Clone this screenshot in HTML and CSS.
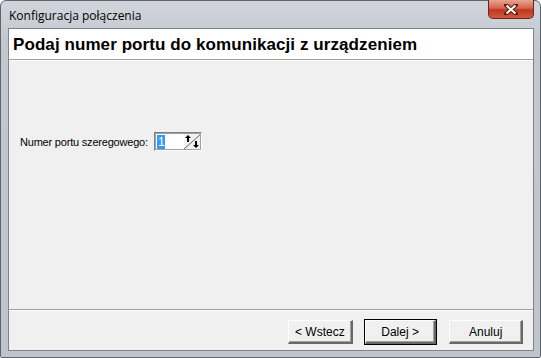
FILE: index.html
```html
<!DOCTYPE html>
<html lang="pl">
<head>
    <meta charset="UTF-8">
    <title>Konfiguracja połączenia</title>
    <link rel="stylesheet" href="styles.css">
</head>
<body>
    <div class="window">
        <div class="titlebar">
            <span class="title">Konfiguracja połączenia</span>
            <div class="close">
                <svg width="14" height="11" viewBox="0 0 14 11">
                    <path d="M2 1 L12 10 M12 1 L2 10" stroke="#5a1a10" stroke-width="4" stroke-linecap="square"/>
                    <path d="M2.5 1.5 L11.5 9.5 M11.5 1.5 L2.5 9.5" stroke="#ffffff" stroke-width="2"/>
                </svg>
            </div>
        </div>
        <div class="client">
            <div class="header">Podaj numer portu do komunikacji z urządzeniem</div>
            <div class="content">
                <div class="field">
                    <span class="label">Numer portu szeregowego:</span>
                    <div class="spin">
                        <span class="spin-value"><span class="sel">1</span></span>
                        <div class="spin-btn">
                            <svg width="17" height="15" viewBox="0 0 17 15">
                                <line x1="0" y1="15" x2="17" y2="0" stroke="#606060" stroke-width="1"/>
                                <path d="M4 1 L1 4 H3 V8 H5 V4 H7 Z" fill="#000"/>
                                <path d="M12 14 L9 11 H11 V7 H13 V11 H15 Z" fill="#000"/>
                            </svg>
                        </div>
                    </div>
                </div>
            </div>
            <div class="footer">
                <button class="btn">&lt; Wstecz</button>
                <button class="btn btn-default">Dalej &gt;</button>
                <button class="btn btn-cancel">Anuluj</button>
            </div>
        </div>
    </div>
</body>
</html>
```

FILE: styles.css
```css
body {
    margin: 0;
    padding: 0;
    background: #ffffff;
    font-family: "Liberation Sans", Arial, sans-serif;
}
.window {
    width: 541px;
    height: 358px;
    box-sizing: border-box;
    background: linear-gradient(#d2d6dc, #c3c8cf 40px, #c0c5cc);
    border: 1px solid #5c6470;
    border-radius: 6px 6px 2px 2px;
    display: flex;
    flex-direction: column;
}
.titlebar {
    height: 27px;
    display: flex;
    justify-content: space-between;
    align-items: flex-start;
    padding: 0 6px 0 8px;
}
.title {
    font-family: "Open Sans", "Noto Sans", sans-serif;
    font-size: 12px;
    color: #000;
    margin-top: 6px;
}
.close {
    width: 46px;
    height: 19px;
    margin-top: -1px;
    box-sizing: border-box;
    border: 1px solid #5e2a22;
    border-top: none;
    border-radius: 0 0 5px 5px;
    background: linear-gradient(#e8a493, #d4654e 45%, #c2361f 55%, #d25a3c);
    display: flex;
    align-items: center;
    justify-content: center;
}
.client {
    flex: 1;
    margin: 0 6px 6px 7px;
    background: #f0f0f0;
    border: 1px solid #7d8490;
    display: flex;
    flex-direction: column;
}
.header {
    height: 30px;
    background: #ffffff;
    border-bottom: 1px solid #a0a0a0;
    box-shadow: 0 1px 0 #ffffff;
    font-size: 17px;
    font-weight: bold;
    letter-spacing: 0.08px;
    line-height: 31px;
    padding-left: 4px;
    color: #000;
}
.content {
    flex: 1;
    padding: 72px 0 0 11px;
}
.field {
    display: flex;
    align-items: center;
    gap: 6px;
    font-size: 11px;
    letter-spacing: -0.2px;
}
.spin {
    width: 48px;
    height: 19px;
    box-sizing: border-box;
    border-top: 1px solid #808080;
    border-left: 1px solid #808080;
    border-right: 1px solid #ffffff;
    border-bottom: 1px solid #ffffff;
    background: #fff;
    display: flex;
    outline: 1px solid #a0a0a0;
    outline-offset: -2px;
}
.spin-value {
    flex: 1;
    padding: 2px 0 0 2px;
    font-size: 12px;
}
.sel {
    background: #3399ff;
    color: #ffffff;
    padding: 0 1px;
}
.spin-btn {
    width: 17px;
    background: #f0f0f0;
    display: flex;
    align-items: center;
}
.spin-btn svg {
    display: block;
}
.footer {
    height: 41px;
    border-top: 1px solid #a0a0a0;
    box-shadow: inset 0 1px 0 #ffffff;
    display: flex;
    align-items: flex-start;
    padding: 10px 0 0 279px;
    box-sizing: border-box;
}
.btn {
    width: 66px;
    height: 24px;
    font-family: "Liberation Sans", Arial, sans-serif;
    font-size: 12px;
    color: #000;
    background: #f0f0f0;
    border-top: 1px solid #ffffff;
    border-left: 1px solid #ffffff;
    border-right: 2px solid #696969;
    border-bottom: 2px solid #696969;
    box-shadow: inset -1px -1px 0 #a0a0a0;
    padding: 0;
    margin-right: 10px;
}
.btn-default {
    width: 73px;
    margin-left: 2px;
    outline: 1px solid #000;
}
.btn-cancel {
    width: 75px;
    margin-left: 3px;
}
```
